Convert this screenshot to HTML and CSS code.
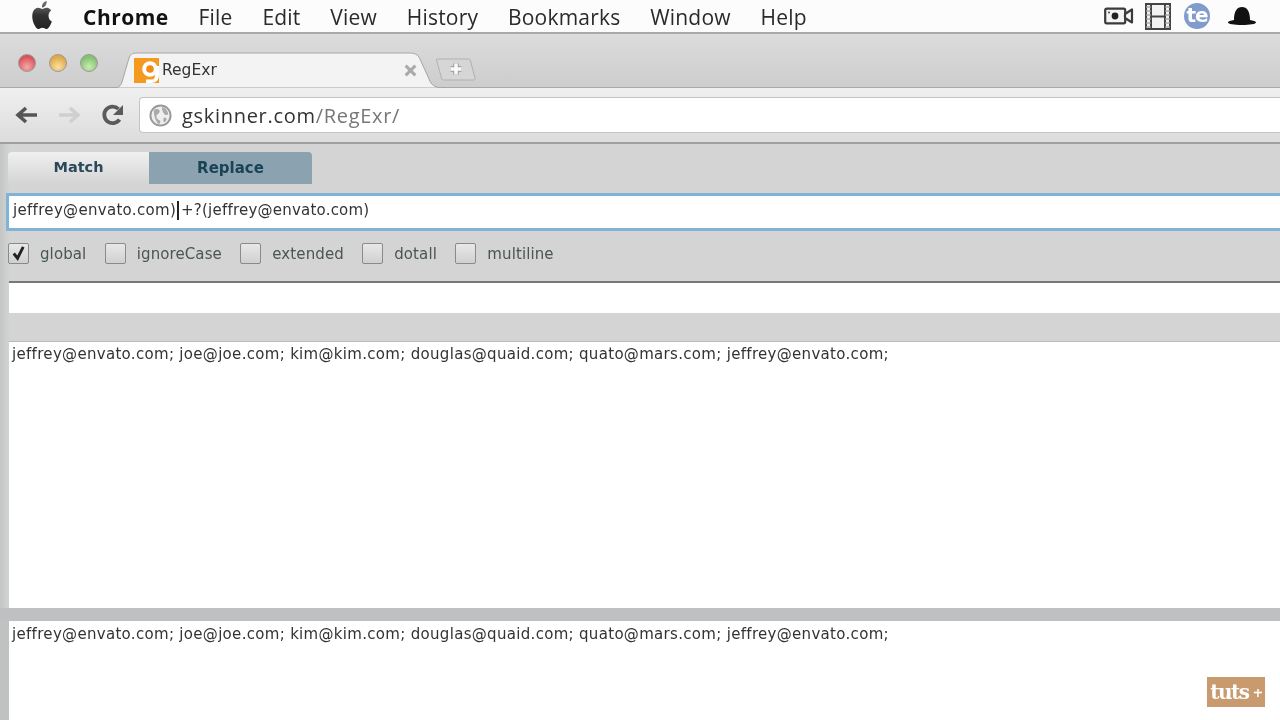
FILE: index.html
```html
<!DOCTYPE html>
<html lang="en">
<head>
<meta charset="utf-8">
<title>RegExr</title>
<link rel="stylesheet" href="styles.css">
</head>
<body>
<header class="menubar">
  <svg class="apple" viewBox="0 0 24 24" preserveAspectRatio="none"><defs><linearGradient id="ag" x1="0" y1="0" x2="0" y2="1"><stop offset="0" stop-color="#777"/><stop offset="0.5" stop-color="#333"/><stop offset="1" stop-color="#222"/></linearGradient></defs><path fill="url(#ag)" d="M12.152 6.896c-.948 0-2.415-1.078-3.96-1.04-2.04.027-3.91 1.183-4.961 3.014-2.117 3.675-.546 9.103 1.519 12.09 1.013 1.454 2.208 3.09 3.792 3.039 1.52-.065 2.09-.987 3.935-.987 1.831 0 2.35.987 3.96.948 1.637-.026 2.676-1.48 3.676-2.948 1.156-1.688 1.636-3.325 1.662-3.415-.039-.013-3.182-1.221-3.22-4.857-.026-3.04 2.48-4.494 2.597-4.559-1.429-2.09-3.623-2.324-4.39-2.376-2-.156-3.675 1.09-4.61 1.09zM15.53 3.83c.843-1.012 1.4-2.427 1.245-3.83-1.207.052-2.662.805-3.532 1.818-.78.896-1.454 2.338-1.273 3.714 1.338.104 2.715-.688 3.559-1.701"/></svg>
  <nav class="menus">
    <span class="menu menu-app">Chrome</span>
    <span class="menu">File</span>
    <span class="menu">Edit</span>
    <span class="menu">View</span>
    <span class="menu">History</span>
    <span class="menu">Bookmarks</span>
    <span class="menu">Window</span>
    <span class="menu">Help</span>
  </nav>
  <div class="status">
    <svg class="st-cam" viewBox="0 0 30 20"><rect x="1.200" y="2.700" width="20" height="14.600" rx="1.500" fill="#f4f4f4" stroke="#3a3a3a" stroke-width="2.200"/><circle cx="11" cy="10" r="3.400" fill="#222"/><circle cx="5" cy="6.500" r="1" fill="#444"/><path d="M21 8l7-4.500v13L21 12z" fill="#f4f4f4" stroke="#3a3a3a" stroke-width="2.200" stroke-linejoin="round"/></svg>
    <svg class="st-film" viewBox="0 0 26 27"><rect x="1" y="1" width="24" height="25" fill="#f2f2f2" stroke="#444" stroke-width="2"/><path d="M6 1v25M20 1v25M6 13.500h14" stroke="#444" stroke-width="2"/><path d="M1.500 4h4M1.500 8h4M1.500 12h4M1.500 16h4M1.500 20h4M1.500 24h4M20.500 4h4M20.500 8h4M20.500 12h4M20.500 16h4M20.500 20h4M20.500 24h4" stroke="#bbb" stroke-width="1.800"/></svg>
    <div class="st-te"><span>te</span></div>
    <svg class="st-hat" viewBox="0 0 30 20"><path d="M7 14C7 5 10 1 15 1s8 4 8 13c3 .5 6 1.300 6 2.500 0 1.500-6 2.500-14 2.500S1 18 1 16.500C1 15.300 4 14.500 7 14z" fill="#111"/></svg>
  </div>
</header>

<div class="tabstrip">
  <div class="lights">
    <i class="light red"></i><i class="light yellow"></i><i class="light green"></i>
  </div>
  <div class="tab">
    <svg class="tab-shape" viewBox="0 0 332 36" preserveAspectRatio="none"><path d="M0 36c5 0 8-2 9-6L16 6c1-3 3-5 8-5H296c5 0 9 1 11 6l9 20c2 6 6 9 16 9z" fill="#f3f3f3" stroke="#a5a5a5"/></svg>
    <svg class="favicon" viewBox="0 0 25 25"><rect width="25" height="25" fill="#f39a1f"/><circle cx="16" cy="11" r="7.800" fill="#fff"/><circle cx="16" cy="11" r="3.800" fill="#f28a14"/><path d="M21 8h4v9c0 5-3 8-8 8h-5v-3.500h6c2 0 3-2 3-4z" fill="#fff"/></svg>
    <span class="tab-title">RegExr</span>
    <svg class="tab-close" viewBox="0 0 12 12"><path d="M1.500 1.500l9 9M10.500 1.500l-9 9" stroke="#aaa" stroke-width="2.800"/></svg>
  </div>
  <svg class="newtab" viewBox="0 0 40 23"><path d="M1 1h31c1.500 0 2 .5 2.500 2L39 20c.3 1.300-.2 2-1.500 2H8c-1.500 0-2-.5-2.500-2L.5 2C.3 1.400.5 1 1 1z" fill="#d6d6d6" stroke="#b0b0b0"/><path d="M20 5.500v11M14.500 11h11" stroke="#9a9a9a" stroke-width="5.500"/><path d="M20 5.500v11M14.500 11h11" stroke="#fafafa" stroke-width="3.500"/></svg>
</div>

<div class="toolbar">
  <svg class="nav" viewBox="0 0 24 20"><path d="M22 10H5M11 3l-8 7 8 7" fill="none" stroke="#555" stroke-width="3.600"/></svg>
  <svg class="nav nav-fwd" viewBox="0 0 24 20"><path d="M2 10h17M13 3l8 7-8 7" fill="none" stroke="#cfcfcf" stroke-width="3.600"/></svg>
  <svg class="nav reload" viewBox="0 0 24 24"><path d="M18.500 16.500A8.300 8.300 0 1 1 17.500 6" fill="none" stroke="#5a5a5a" stroke-width="3.800"/><path d="M22 2v10H12z" fill="#5a5a5a"/></svg>
  <div class="omnibox">
    <svg class="globe" viewBox="0 0 24 24"><circle cx="12" cy="12" r="10.500" fill="#eee" stroke="#999" stroke-width="2"/><path d="M5 6c3-1 5-1 6 1s-2 3-3 5 1 4 3 5 0 4-1 4c-3-3-5-8-5-15zM14 3c3 1 6 4 6 8-2 1-4 0-5-2s-2-4-1-6zM16 14c2 0 3 1 2 3s-3 3-3 1 0-4 1-4z" fill="#aaa"/></svg>
    <span class="url">gskinner.com<span class="url-path">/RegExr/</span></span>
  </div>
</div>

<main class="app">
  <div class="modes">
    <div class="mode">Match</div>
    <div class="mode mode-on">Replace</div>
  </div>
  <div class="pattern"><span>jeffrey@envato.com)</span><i class="caret"></i><span class="pattern-rest">+?(jeffrey@envato.com)</span></div>
  <div class="flags">
    <label class="flag"><span class="box"><svg viewBox="0 0 20 20"><path d="M5 10l4 5 6-12" fill="none" stroke="#222" stroke-width="3"/></svg></span>global</label>
    <label class="flag"><span class="box"></span>ignoreCase</label>
    <label class="flag"><span class="box"></span>extended</label>
    <label class="flag"><span class="box"></span>dotall</label>
    <label class="flag"><span class="box"></span>multiline</label>
  </div>
  <div class="replace-field"></div>
  <div class="source">jeffrey@envato.com; joe@joe.com; kim@kim.com; douglas@quaid.com; quato@mars.com; jeffrey@envato.com;</div>
  <div class="result">jeffrey@envato.com; joe@joe.com; kim@kim.com; douglas@quaid.com; quato@mars.com; jeffrey@envato.com;</div>
</main>

<div class="badge">tuts<b>+</b></div>
</body>
</html>
```
FILE: styles.css
```css
* { box-sizing: border-box; }
html, body { margin: 0; height: 720px; overflow: hidden; }
body {
  width: 1280px;
  position: relative;
  font-family: "DejaVu Sans", sans-serif;
  background: #d0d2d2;
  display: flex;
  flex-direction: column;
  filter: blur(0.45px);
}
.menubar {
  height: 34px;
  flex: none;
  background: #fcfcfc;
  border-bottom: 2px solid #a9a9a9;
  display: flex;
  align-items: center;
  padding: 1px 23px 0 30px;
}
.apple { width: 24px; height: 28px; margin-top: -3px; flex: none; }
.menus { display: flex; margin-left: 29px; gap: 29.800px; align-items: baseline; }
.menu { font-size: 21px; color: #2a2a2a; font-family: "Open Sans", sans-serif; letter-spacing: 0.2px; }
.menu-app { font-weight: 700; color: #111; letter-spacing: 0.5px; }
.status { margin-left: auto; margin-top: -1px; display: flex; align-items: center; }
.st-cam { width: 30px; height: 20px; }
.st-film { width: 26px; height: 27px; margin-left: 11px; }
.st-te {
  width: 26px; height: 26px; border-radius: 50%;
  background: #7f9ccd; margin-left: 13px;
  display: flex; align-items: center; justify-content: center;
  color: #fff; font-size: 20px; font-weight: 700; letter-spacing: -1px; line-height: 1;
  padding-bottom: 3px;
}
.st-hat { width: 30px; height: 20px; margin-left: 17px; }

.tabstrip {
  height: 54px;
  flex: none;
  display: flex;
  align-items: flex-end;
  background: linear-gradient(#dcdcdc, #cdcdcd);
  padding-left: 18px;
  border-bottom: 1px solid #a8a8a8;
}
.lights { display: flex; gap: 13px; align-self: flex-start; margin-top: 20px; }
.light { width: 18px; height: 18px; border-radius: 50%; border: 1px solid #999; }
.red { background: radial-gradient(circle at 50% 75%, #f8a8a8, #d9535a 70%); }
.yellow { background: radial-gradient(circle at 50% 75%, #fbe0a0, #e0a848 70%); }
.green { background: radial-gradient(circle at 50% 75%, #c8eeb0, #84c070 70%); }

.tab {
  position: relative;
  width: 332px;
  height: 36px;
  margin-left: 15px;
  margin-bottom: -1px;
  display: flex;
  align-items: center;
  padding-left: 21px;
}
.tab-shape { position: absolute; left: 0; top: 0; width: 100%; height: 100%; }
.favicon { position: relative; width: 25px; height: 25px; flex: none; }
.tab-title { position: relative; margin-left: 3px; font-size: 15.500px; color: #333; }
.tab-close { position: relative; width: 13px; height: 13px; margin-left: auto; margin-right: 28px; }
.newtab { width: 40px; height: 23px; margin: 0 0 6px -9px; flex: none; }

.toolbar {
  height: 56px;
  flex: none;
  background: linear-gradient(#f0f0f0, #dcdcdc);
  border-bottom: 2px solid #9f9f9f;
  display: flex;
  align-items: center;
  padding-left: 15px;
}
.nav { width: 24px; height: 20px; margin-right: 18px; flex: none; }
.nav-fwd { margin-right: 20px; }
.reload { height: 24px; margin-right: 14px; }
.omnibox {
  flex: 1;
  height: 36px;
  background: #fff;
  border: 1px solid #c4c4c4;
  border-right: 0;
  border-radius: 4px 0 0 4px;
  display: flex;
  align-items: center;
  padding-left: 9px;
}
.globe { width: 23px; height: 23px; flex: none; }
.url { margin-left: 10px; font-size: 20px; color: #333; font-family: "Open Sans", sans-serif; letter-spacing: .7px; }
.url-path { color: #777; }

.app { flex: 1; display: flex; flex-direction: column; padding-left: 9px; background: linear-gradient(90deg, #c4c6c6, #d4d4d4 10px); min-height: 0; }
.modes { display: flex; height: 32px; margin: 8px 0 0 -1px; }
.mode {
  width: 141px;
  border-radius: 4px 0 0 0;
  background: linear-gradient(#f0f0f0, #d4d4d4);
  display: flex; align-items: center; justify-content: center;
  font-size: 14.500px; font-weight: 700; color: #2a4a5a;
  padding-bottom: 2px;
}
.mode-on { width: 163px; font-size: 15px; border-radius: 0 4px 0 0; background: #8ba3b0; color: #1a4355; padding-bottom: 0; }
.pattern {
  height: 38px;
  margin: 9px 0 0 -3px;
  background: #fff;
  border: 3px solid #7fb3d8;
  border-right: 0;
  display: flex;
  align-items: center;
  padding: 0 0 4px 4px;
  font-size: 15px;
  letter-spacing: 0.31px;
  color: #333;
}
.pattern-rest { letter-spacing: 0.22px; }
.caret { width: 2px; height: 19px; background: #222; margin: 0 2px 0 1px; }
.flags { display: flex; height: 45px; margin-bottom: 5px; align-items: center; margin-left: -1px; }
.flag { display: flex; align-items: center; font-size: 15px; letter-spacing: 0.1px; color: #4a5555; margin-right: 18.400px; }
.box {
  width: 21px; height: 21px;
  border: 1px solid #8a8a8a;
  background: linear-gradient(#e8e8e8, #d0d0d0);
  border-radius: 2px;
  margin-right: 11px;
  display: block;
}
.box svg { display: block; width: 19px; height: 19px; }
.replace-field {
  height: 32px;
  background: #fff;
  border-top: 2px solid #777;
  flex: none;
}
.source {
  height: 267px;
  margin-top: 28px;
  flex: none;
  background: #fff;
  border-top: 1px solid #bbb;
  padding: 3px 3px;
  font-size: 15px;
  letter-spacing: 0.31px;
  color: #333;
}
.result {
  flex: 1;
  margin-top: 13px;
  margin-left: -9px;
  padding: 4px 3px 0 12px;
  background: linear-gradient(90deg, #c0c2c2 9px, #fff 9px);
  font-size: 15px;
  letter-spacing: 0.31px;
  color: #333;
  box-shadow: 0 -13px 0 #bec0c2;
}
.badge {
  position: absolute;
  left: 1207px; top: 677px;
  width: 58px; height: 30px;
  background: #c89a6e;
  color: #fff;
  font-family: "DejaVu Serif", serif;
  font-weight: 700;
  font-size: 20px;
  letter-spacing: -1.500px;
  display: flex;
  align-items: center;
  justify-content: center;
}
.badge b { font-size: 13px; margin-left: 4px; }
```
